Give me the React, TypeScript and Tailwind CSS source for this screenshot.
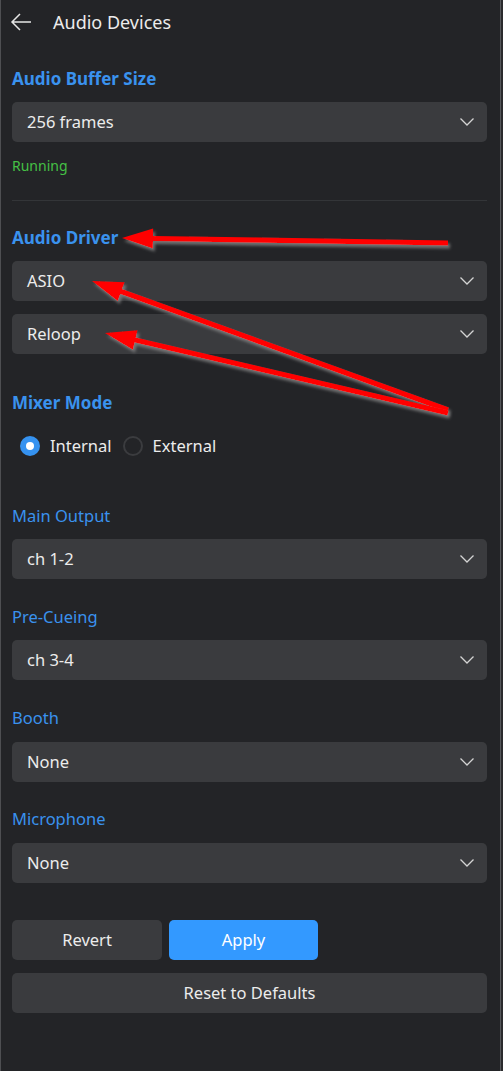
import React from 'react';

const font = { fontFamily: '"Noto Sans", "Open Sans", sans-serif' };

type Pt = [number, number];

// red annotation arrows, tail -> tip
const arrows: { tail: Pt; tip: Pt }[] = [
  { tail: [448, 243], tip: [122, 238] },
  { tail: [448, 410], tip: [92, 281] },
  { tail: [448, 413], tip: [105, 333] },
];

function arrowPoints(tail: Pt, tip: Pt) {
  const dx = tip[0] - tail[0];
  const dy = tip[1] - tail[1];
  const len = Math.hypot(dx, dy);
  const ux = dx / len;
  const uy = dy / len;
  const nx = -uy;
  const ny = ux;
  const head = 31;
  const hw = 10;
  const sw = 2.6;
  const bx = tip[0] - ux * head;
  const by = tip[1] - uy * head;
  const pts: Pt[] = [
    [tail[0] + nx * sw, tail[1] + ny * sw],
    [bx + nx * sw, by + ny * sw],
    [bx + nx * hw, by + ny * hw],
    tip,
    [bx - nx * hw, by - ny * hw],
    [bx - nx * sw, by - ny * sw],
    [tail[0] - nx * sw, tail[1] - ny * sw],
  ];
  return pts.map((p) => `${p[0].toFixed(1)},${p[1].toFixed(1)}`).join(' ');
}

function Chevron() {
  return (
    <svg width="16" height="10" viewBox="0 0 16 10" fill="none">
      <path d="M1.5 1.5 L8 8 L14.5 1.5" stroke="#d4d4d4" strokeWidth="1.3" />
    </svg>
  );
}

function Select({ value, className = '' }: { value: string; className?: string }) {
  return (
    <div
      className={`flex h-10 items-center justify-between rounded-[5px] bg-[#3a3b3e] pl-[15px] pr-[12px] text-[16.5px] text-[#ececec] ${className}`}
    >
      <span>{value}</span>
      <Chevron />
    </div>
  );
}

function Label({ children, bold, className = '' }: { children: string; bold?: boolean; className?: string }) {
  return (
    <div
      className={`h-6 leading-6 text-[#3a92ee] ${bold ? 'text-[17px] font-bold' : 'text-[16.5px] font-normal'} ${className}`}
    >
      {children}
    </div>
  );
}

export default function App() {
  return (
    <div className="flex h-[1071px] w-[503px] bg-[#1e1f21]" style={font}>
      <div className="relative h-full w-[500px] border-l border-[#4e4f52] bg-[#232427]">
        {/* Header */}
        <div className="flex h-11 items-center pl-[9px]">
          <svg width="22" height="20" viewBox="0 0 22 20" fill="none">
            <path d="M2 10 H21 M10 2 L2 10 L10 18" stroke="#e6e6e6" strokeWidth="1.5" />
          </svg>
          <span className="ml-[21px] text-[18px] text-[#ececec]">Audio Devices</span>
        </div>

        <div className="pl-[11px] pr-[13px]">
          <Label bold className="mt-[23px]">Audio Buffer Size</Label>
          <Select value="256 frames" className="mt-[11px]" />
          <div className="mt-[14px] h-5 text-[14px] leading-5 text-[#45c045]">Running</div>
          <div className="mt-6 h-px bg-[#333538]" />

          <Label bold className="mt-[25px]">Audio Driver</Label>
          <Select value="ASIO" className="mt-[11px]" />
          <Select value="Reloop" className="mt-[13px]" />

          <Label bold className="mt-[37px]">Mixer Mode</Label>
          <div className="mt-[19px] flex h-6 items-center pl-[8px] text-[16.5px] text-[#ececec]">
            <span className="flex h-5 w-5 items-center justify-center rounded-full bg-[#3592f0]">
              <span className="h-2 w-2 rounded-full bg-white" />
            </span>
            <span className="ml-[10px]">Internal</span>
            <span className="ml-[11px] h-5 w-5 rounded-full border-2 border-[#3b3c3f]" />
            <span className="ml-[10px]">External</span>
          </div>

          <Label className="mt-[46px]">Main Output</Label>
          <Select value="ch 1-2" className="mt-[11px]" />

          <Label className="mt-[26px]">Pre-Cueing</Label>
          <Select value="ch 3-4" className="mt-[11px]" />

          <Label className="mt-[26px]">Booth</Label>
          <Select value="None" className="mt-[12px]" />

          <Label className="mt-[25px]">Microphone</Label>
          <Select value="None" className="mt-[12px]" />

          <div className="mt-[37px] flex gap-[7px]">
            <button className="h-10 w-[150px] rounded-[5px] bg-[#3a3b3e] text-[16.5px] text-[#ececec]">Revert</button>
            <button className="h-10 w-[149px] rounded-[5px] bg-[#3399ff] text-[16.5px] text-white">Apply</button>
          </div>
          <button className="mt-[13px] h-10 w-full rounded-[5px] bg-[#3a3b3e] text-[16.5px] text-[#ececec]">
            Reset to Defaults
          </button>
        </div>

        {/* annotation arrows */}
        <svg className="pointer-events-none absolute left-[-1px] top-0" width="500" height="1071">
          <defs>
            <filter id="sh" x="-10%" y="-50%" width="130%" height="200%">
              <feDropShadow dx="2" dy="3" stdDeviation="1.5" floodColor="#8a8a8a" floodOpacity="0.75" />
            </filter>
          </defs>
          {arrows.map((a, i) => (
            <polygon key={i} points={arrowPoints(a.tail, a.tip)} fill="#ff0000" filter="url(#sh)" />
          ))}
        </svg>
      </div>
      <div className="h-full w-px bg-[#55575a]" />
      <div className="h-full w-[2px] bg-[#2a2b2d]" />
    </div>
  );
}
